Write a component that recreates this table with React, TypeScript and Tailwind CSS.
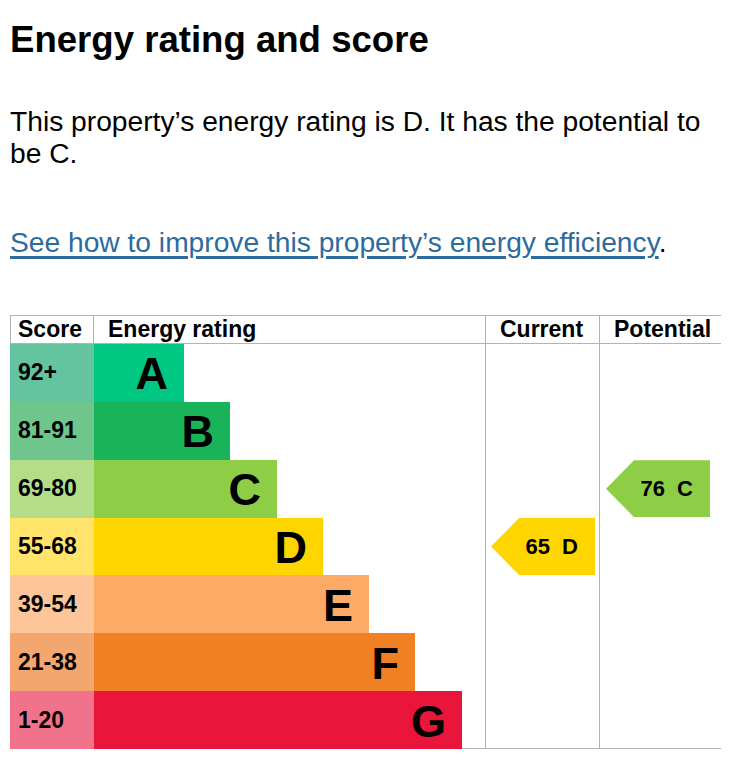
import React from "react";

type Row = {
  score: string;
  letter: string;
  width: number;
  scoreBg: string;
  barBg: string;
};

const rows: Row[] = [
  { score: "92+", letter: "A", width: 90, scoreBg: "bg-[#63c49f]", barBg: "bg-[#00c781]" },
  { score: "81-91", letter: "B", width: 136, scoreBg: "bg-[#6ec68c]", barBg: "bg-[#19b459]" },
  { score: "69-80", letter: "C", width: 183, scoreBg: "bg-[#b4dd8a]", barBg: "bg-[#8dce46]" },
  { score: "55-68", letter: "D", width: 229, scoreBg: "bg-[#ffe36a]", barBg: "bg-[#ffd500]" },
  { score: "39-54", letter: "E", width: 275, scoreBg: "bg-[#fcc59a]", barBg: "bg-[#fcaa65]" },
  { score: "21-38", letter: "F", width: 321, scoreBg: "bg-[#f4a66f]", barBg: "bg-[#ef8023]" },
  { score: "1-20", letter: "G", width: 368, scoreBg: "bg-[#f0738b]", barBg: "bg-[#e9153b]" },
];

function Arrow({ label, bg }: { label: string; bg: string }) {
  return (
    <div
      className={`${bg} w-[104px] h-[57px] flex items-center justify-end pr-[17px] [clip-path:polygon(0_50%,28px_0,100%_0,100%_100%,28px_100%)]`}
    >
      <span className="text-[22px] font-bold leading-none whitespace-pre text-black">{label}</span>
    </div>
  );
}

export default function App() {
  return (
    <div className="bg-white w-[746px] h-[782px] pl-[10px] text-black font-['Liberation_Sans',Arial,sans-serif] overflow-hidden">
      <h2 className="pt-[20px] text-[36.6px] leading-[40px] font-bold">Energy rating and score</h2>
      <p className="mt-[45px] w-[712px] text-[28.2px] leading-[32px]">
        This property’s energy rating is D. It has the potential to be C.
      </p>
      <p className="mt-[57px] text-[28.2px] leading-[32px]">
        <a
          href="#"
          className="text-[#2c6b9e] underline decoration-[3px] underline-offset-[4px]"
        >
          See how to improve this property’s energy efficiency
        </a>
        .
      </p>

      <div className="mt-[57px] w-[711px]">
        {/* header */}
        <div className="grid grid-cols-[84px_391px_114px_122px] h-[29px] border-t border-b border-[#b1b4b6] text-[23px] leading-[27px] font-bold">
          <div className="border-l border-r border-[#b1b4b6] pl-[7px]">Score</div>
          <div className="pl-[14px]">Energy rating</div>
          <div className="border-l border-[#b1b4b6] pl-[14px]">Current</div>
          <div className="border-l border-[#b1b4b6] pl-[14px]">Potential</div>
        </div>

        {/* body */}
        {rows.map((r, i) => {
          const last = i === rows.length - 1;
          return (
            <div key={r.letter} className="grid grid-cols-[84px_391px_114px_122px] h-[57.86px]">
              <div className={`${r.scoreBg} flex items-center pl-[8px] text-[23px] font-bold leading-none`}>
                {r.score}
              </div>
              <div className="flex">
                <div
                  className={`${r.barBg} h-full flex items-center justify-end pr-[16px] pt-[2px] text-[45px] font-bold leading-none`}
                  style={{ width: r.width }}
                >
                  {r.letter}
                </div>
                <div className={`flex-1 ${last ? "border-b border-[#b1b4b6]" : ""}`} />
              </div>
              <div
                className={`border-l border-[#b1b4b6] flex items-center pl-[5px] ${last ? "border-b" : ""}`}
              >
                {r.letter === "D" && <Arrow label="65  D" bg="bg-[#ffd500]" />}
              </div>
              <div
                className={`border-l border-[#b1b4b6] flex items-center pl-[6px] ${last ? "border-b" : ""}`}
              >
                {r.letter === "C" && <Arrow label="76  C" bg="bg-[#8dce46]" />}
              </div>
            </div>
          );
        })}
      </div>
    </div>
  );
}
